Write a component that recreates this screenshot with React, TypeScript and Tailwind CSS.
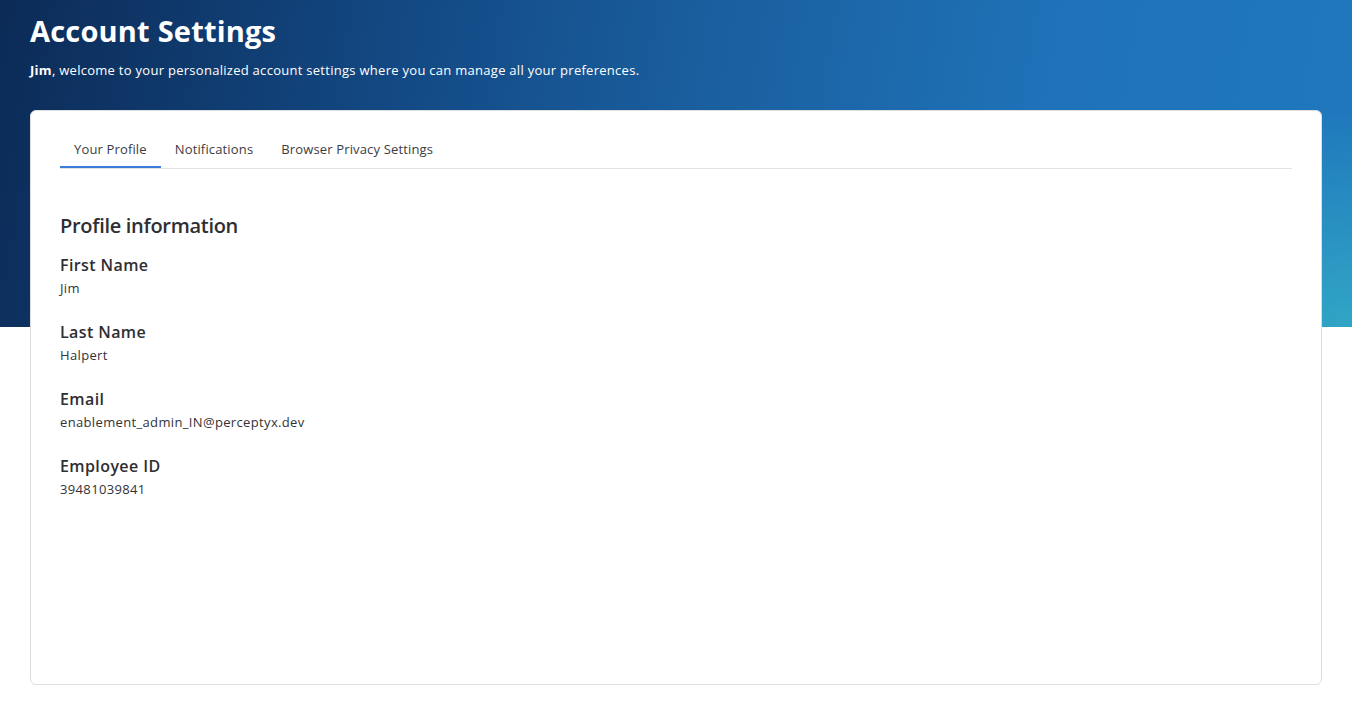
const TABS = ['Your Profile', 'Notifications', 'Browser Privacy Settings']

const FIELDS = [
  { label: 'First Name', value: 'Jim' },
  { label: 'Last Name', value: 'Halpert' },
  { label: 'Email', value: 'enablement_admin_IN@perceptyx.dev' },
  { label: 'Employee ID', value: '39481039841' },
]

export default function App() {
  return (
    <div className="min-h-screen bg-white font-['Open_Sans',sans-serif] text-[#2e2e33]">
      {/* Hero band */}
      <header className="h-[327px] px-[30px] pt-[13px] bg-[radial-gradient(ellipse_420px_220px_at_100%_100%,rgba(50,168,198,0.95)_0%,rgba(50,168,198,0)_100%),linear-gradient(100deg,#0c2b57_0%,#134a85_30%,#1a5e9e_50%,#1f72b8_75%,#1f78bd_100%)]">
        <h1 className="text-[29px] leading-[36px] font-bold text-white tracking-[0.2px]">Account Settings</h1>
        <p className="mt-[12px] text-[13px] leading-[18px] text-white tracking-[0.28px]">
          <span className="font-bold">Jim</span>, welcome to your personalized account settings where you can manage all your preferences.
        </p>
      </header>

      {/* Card */}
      <div className="mx-[30px] -mt-[217px] h-[575px] rounded-md border border-[#dedede] bg-white px-[29px] pt-[17px]">
        <div className="flex border-b border-[#e3e3e3]">
          {TABS.map((t, i) => (
            <button
              key={t}
              className={
                'px-[14px] pt-[12px] pb-[8px] text-[13px] leading-[18px] tracking-[0.15px] border-b-2 text-[#3c3c44] ' +
                (i === 0 ? 'border-[#3a7bdc]' : 'border-transparent')
              }
            >
              {t}
            </button>
          ))}
        </div>

        <h2 className="mt-[43px] text-[20px] leading-[28px] font-semibold tracking-[-0.3px] text-[#2e2e33]">Profile information</h2>

        <div className="mt-[14px] flex flex-col gap-[24px]">
          {FIELDS.map(f => (
            <div key={f.label}>
              <div className="text-[16px] leading-[22px] font-semibold tracking-[0.4px] text-[#2e2e33]">{f.label}</div>
              <div className="mt-[3px] text-[13px] leading-[18px] tracking-[0.35px] text-[#333338]">{f.value}</div>
            </div>
          ))}
        </div>
      </div>
    </div>
  )
}
